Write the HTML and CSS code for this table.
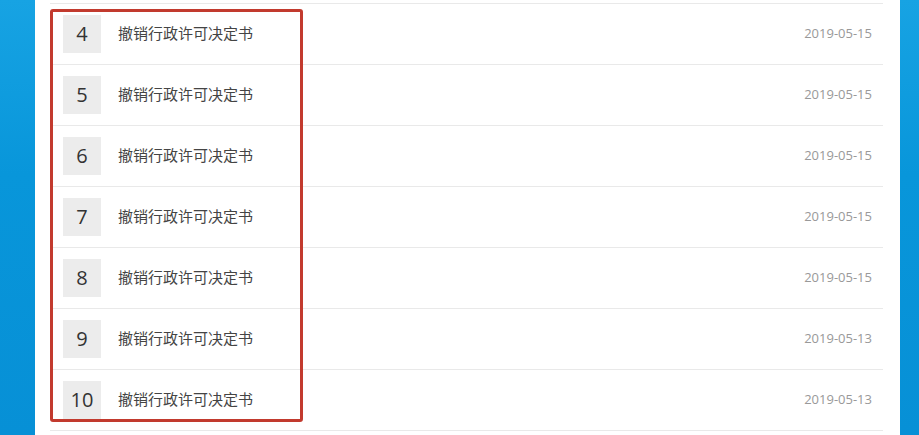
FILE: index.html
```html
<!DOCTYPE html>
<html lang="zh">
<head>
<meta charset="utf-8">
<link rel="stylesheet" href="styles.css">
</head>
<body>
<div class="page">
  <div class="panel">
    <ul class="list">
      <li class="row"><span class="num">4</span><span class="title">撤销行政许可决定书</span><span class="date">2019-05-15</span></li>
      <li class="row"><span class="num">5</span><span class="title">撤销行政许可决定书</span><span class="date">2019-05-15</span></li>
      <li class="row"><span class="num">6</span><span class="title">撤销行政许可决定书</span><span class="date">2019-05-15</span></li>
      <li class="row"><span class="num">7</span><span class="title">撤销行政许可决定书</span><span class="date">2019-05-15</span></li>
      <li class="row"><span class="num">8</span><span class="title">撤销行政许可决定书</span><span class="date">2019-05-15</span></li>
      <li class="row"><span class="num">9</span><span class="title">撤销行政许可决定书</span><span class="date">2019-05-13</span></li>
      <li class="row"><span class="num">10</span><span class="title">撤销行政许可决定书</span><span class="date">2019-05-13</span></li>
    </ul>
    <div class="highlight"></div>
  </div>
</div>
</body>
</html>
```
FILE: styles.css
```css
html, body {
  margin: 0;
  padding: 0;
  height: 100%;
  overflow: hidden;
}
body {
  background: linear-gradient(180deg, #17a3e3 0%, #0896da 40%, #0790d6 100%);
  font-family: "Noto Sans CJK SC", "Open Sans", sans-serif;
}
.page {
  display: flex;
  height: 100%;
  padding-left: 35px;
}
.panel {
  position: relative;
  width: 865px;
  background: #fff;
  padding: 3px 0 0 15px;
  box-sizing: border-box;
}
.list {
  list-style: none;
  margin: 0;
  padding: 0;
  width: 833px;
  border-top: 1px solid #e9e9e9;
}
.row {
  display: flex;
  align-items: center;
  height: 60px;
  border-bottom: 1px solid #e9e9e9;
  padding: 0 11px 0 13px;
}
.num {
  width: 38px;
  height: 38px;
  background: #ececec;
  color: #333;
  font-family: "Open Sans", "Noto Sans", sans-serif;
  font-size: 20px;
  line-height: 1;
  display: flex;
  align-items: center;
  justify-content: center;
  flex-shrink: 0;
}
.title {
  margin: 0 0 3px 17px;
  font-size: 15px;
  line-height: 1;
  color: #444;
  flex: 1;
}
.date {
  margin-bottom: 2px;
  font-family: "Open Sans", "Noto Sans", sans-serif;
  font-size: 13px;
  line-height: 1;
  color: #999;
}
.highlight {
  position: absolute;
  left: 15px;
  top: 9px;
  width: 253px;
  height: 413px;
  box-sizing: border-box;
  border: 3px solid #c23a2e;
  border-radius: 3px;
}
```
